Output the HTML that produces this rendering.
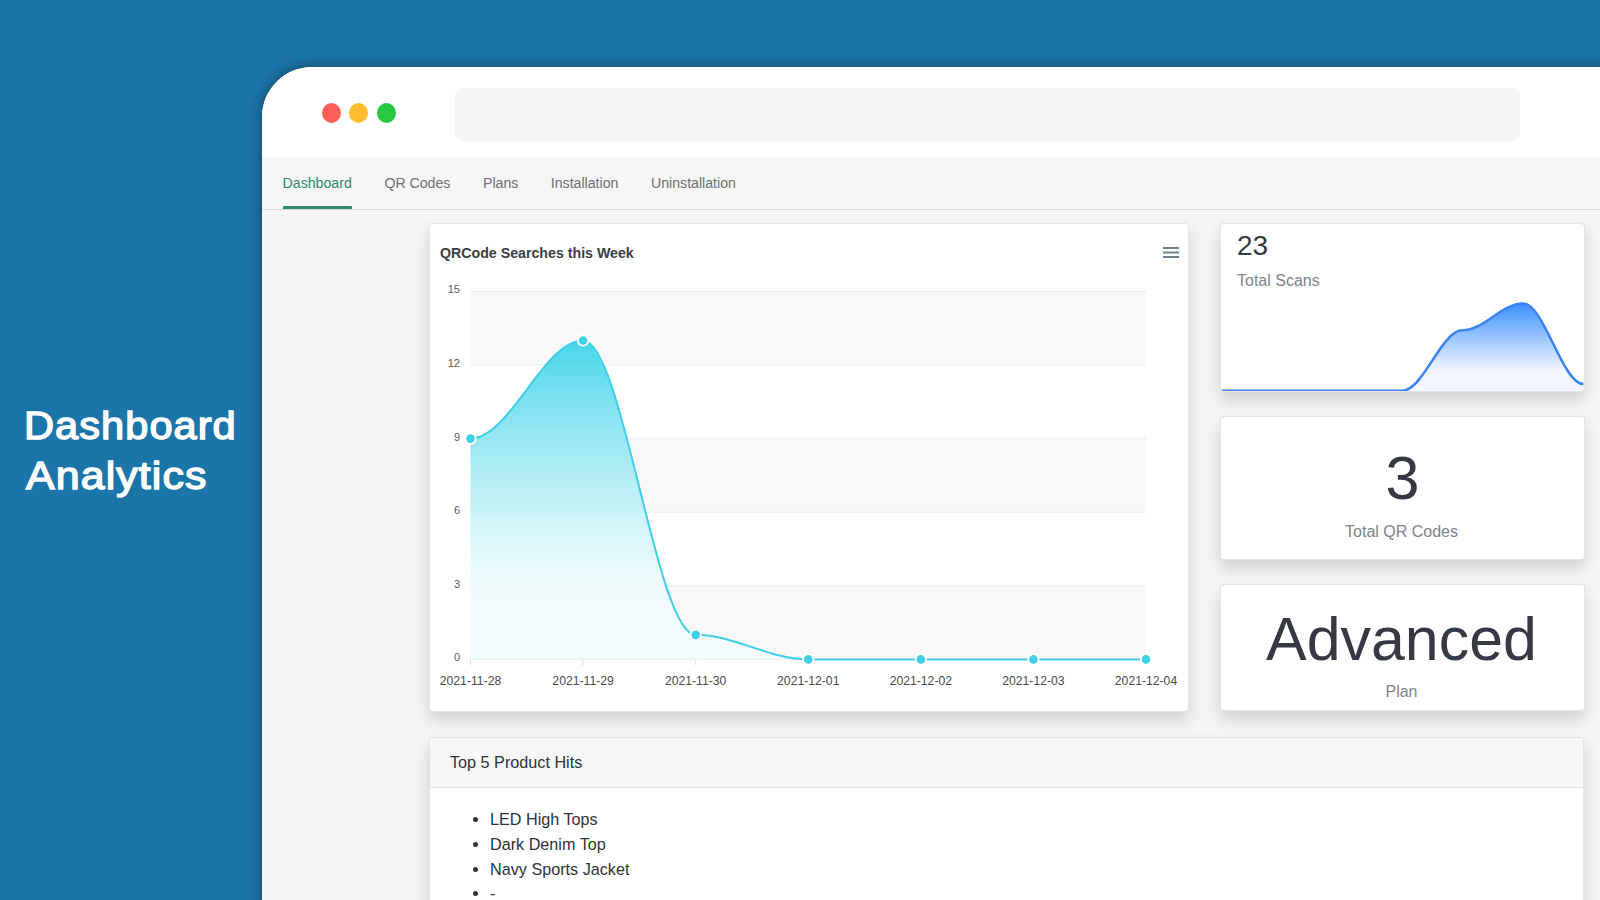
<!DOCTYPE html>
<html lang="en"><head><meta charset="utf-8"><title>Dashboard Analytics</title>
<style>
*{box-sizing:border-box}
html,body{margin:0;padding:0}
body{width:1600px;height:900px;overflow:hidden;background:#1c75a9;font-family:"Liberation Sans",Arial,sans-serif;position:relative;color:#212529}
.hero{margin:0;font-size:39px;line-height:50px;font-weight:normal;color:#fff}
.hero span{position:absolute;white-space:nowrap;transform-origin:0 0;letter-spacing:1px;-webkit-text-stroke:1.4px #fff}
.win{position:absolute;left:262px;top:67px;width:1400px;height:900px;background:#f5f5f5;border-top-left-radius:50px;box-shadow:0 0 13px 1px rgba(0,0,0,.4);overflow:hidden}
.bar{position:absolute;left:0;top:0;width:100%;height:90px;background:#fff}
.dot{position:absolute;top:36px;width:19px;height:20px;border-radius:50%}
.addr{position:absolute;left:193px;top:21px;width:1065px;height:53px;border-radius:8px;background:#f5f5f5}
.tabs{position:absolute;left:0;top:90px;width:100%;height:53px;border-bottom:1px solid #d6d8da;background:#f6f6f6;font-size:14.15px}
.tab{position:absolute;top:0;height:52px;line-height:53px;color:#6d7175;white-space:nowrap}
.tab.on{color:#2b8a6c}
.tab.on:after{content:"";position:absolute;left:0;right:0;bottom:0;height:3px;background:#2f8a6b;border-radius:1px 1px 0 0}
.card{position:absolute;background:#fff;border:1px solid rgba(0,0,0,.1);border-radius:4px;box-shadow:0 8px 16px rgba(0,0,0,.15)}
.muted{color:#7d848b}
.big{color:#343a40}
.hd{position:absolute;left:0;top:0;right:0;height:50px;background:#f7f7f7;border-bottom:1px solid #dfdfdf;border-radius:3px 3px 0 0;padding:11.5px 20px;font-size:16.2px;line-height:25px;color:#2e3338}
ul{position:absolute;left:20px;top:68.5px;margin:0;padding:0 0 0 40px;font-size:16.2px;line-height:25px;color:#2e3338}
</style></head><body>
<h1 class="hero"><span style="top:401px;left:23.6px;transform:scaleX(1.065)">Dashboard</span><span style="top:450.7px;left:25.7px;transform:scaleX(1.10)">Analytics</span></h1>
<div class="win">
  <div class="bar">
    <div class="dot" style="left:59.5px;background:#ff5f57"></div>
    <div class="dot" style="left:87px;background:#febc2e"></div>
    <div class="dot" style="left:114.5px;background:#28c840"></div>
    <div class="addr"></div>
  </div>
  <div class="tabs">
    <div class="tab on" style="left:20.6px">Dashboard</div>
    <div class="tab" style="left:122.4px">QR Codes</div>
    <div class="tab" style="left:221px">Plans</div>
    <div class="tab" style="left:288.8px">Installation</div>
    <div class="tab" style="left:389px">Uninstallation</div>
  </div>
  <div class="card" style="left:167px;top:156px;width:760px;height:489px"><svg width="758" height="487" viewBox="0 0 758 487" style="position:absolute;left:0;top:0;font-family:'Liberation Sans',sans-serif">
<defs><linearGradient id="g1" x1="0" y1="0" x2="0" y2="1"><stop offset="0" stop-color="#42d4ea" stop-opacity="0.97"/><stop offset="0.8" stop-color="#eefbfd" stop-opacity="0.6"/><stop offset="1" stop-color="#eefbfd" stop-opacity="0.6"/></linearGradient></defs>
<rect x="40.50" y="67.40" width="675.50" height="73.60" fill="#f8f8f8"/><rect x="40.50" y="214.60" width="675.50" height="73.60" fill="#f8f8f8"/><rect x="40.50" y="361.80" width="675.50" height="73.60" fill="#f8f8f8"/><line x1="40.50" y1="67.40" x2="716.00" y2="67.40" stroke="#ececec" stroke-width="1"/><line x1="40.50" y1="141.00" x2="716.00" y2="141.00" stroke="#ececec" stroke-width="1"/><line x1="40.50" y1="214.60" x2="716.00" y2="214.60" stroke="#ececec" stroke-width="1"/><line x1="40.50" y1="288.20" x2="716.00" y2="288.20" stroke="#ececec" stroke-width="1"/><line x1="40.50" y1="361.80" x2="716.00" y2="361.80" stroke="#ececec" stroke-width="1"/><line x1="40.50" y1="435.40" x2="716.00" y2="435.40" stroke="#ececec" stroke-width="1"/>
<line x1="40.50" y1="435.40" x2="40.50" y2="441.40" stroke="#e0e0e0" stroke-width="1"/><line x1="153.08" y1="435.40" x2="153.08" y2="441.40" stroke="#e0e0e0" stroke-width="1"/><line x1="265.67" y1="435.40" x2="265.67" y2="441.40" stroke="#e0e0e0" stroke-width="1"/><line x1="378.25" y1="435.40" x2="378.25" y2="441.40" stroke="#e0e0e0" stroke-width="1"/><line x1="490.83" y1="435.40" x2="490.83" y2="441.40" stroke="#e0e0e0" stroke-width="1"/><line x1="603.42" y1="435.40" x2="603.42" y2="441.40" stroke="#e0e0e0" stroke-width="1"/><line x1="716.00" y1="435.40" x2="716.00" y2="441.40" stroke="#e0e0e0" stroke-width="1"/>
<path d="M40.50 214.60 C79.90 214.60 113.68 116.47 153.08 116.47 C192.49 116.47 226.26 410.87 265.67 410.87 C305.07 410.87 338.85 435.40 378.25 435.40 C417.65 435.40 451.43 435.40 490.83 435.40 C530.24 435.40 564.01 435.40 603.42 435.40 C642.82 435.40 676.60 435.40 716.00 435.40 L716.00 435.40 L40.50 435.40 Z" fill="url(#g1)" id="mainarea"/>
<path d="M40.50 214.60 C79.90 214.60 113.68 116.47 153.08 116.47 C192.49 116.47 226.26 410.87 265.67 410.87 C305.07 410.87 338.85 435.40 378.25 435.40 C417.65 435.40 451.43 435.40 490.83 435.40 C530.24 435.40 564.01 435.40 603.42 435.40 C642.82 435.40 676.60 435.40 716.00 435.40" fill="none" stroke="#3fcfe6" stroke-width="2"/>
<circle cx="40.50" cy="214.60" r="5.2" fill="#3fd0e6" stroke="#fff" stroke-width="1.8"/><circle cx="153.08" cy="116.47" r="5.2" fill="#3fd0e6" stroke="#fff" stroke-width="1.8"/><circle cx="265.67" cy="410.87" r="5.2" fill="#3fd0e6" stroke="#fff" stroke-width="1.8"/><circle cx="378.25" cy="435.40" r="5.2" fill="#3fd0e6" stroke="#fff" stroke-width="1.8"/><circle cx="490.83" cy="435.40" r="5.2" fill="#3fd0e6" stroke="#fff" stroke-width="1.8"/><circle cx="603.42" cy="435.40" r="5.2" fill="#3fd0e6" stroke="#fff" stroke-width="1.8"/><circle cx="716.00" cy="435.40" r="5.2" fill="#3fd0e6" stroke="#fff" stroke-width="1.8"/>
<text x="30.00" y="69.40" text-anchor="end" font-size="11" fill="#5a5a5a">15</text><text x="30.00" y="143.00" text-anchor="end" font-size="11" fill="#5a5a5a">12</text><text x="30.00" y="216.60" text-anchor="end" font-size="11" fill="#5a5a5a">9</text><text x="30.00" y="290.20" text-anchor="end" font-size="11" fill="#5a5a5a">6</text><text x="30.00" y="363.80" text-anchor="end" font-size="11" fill="#5a5a5a">3</text><text x="30.00" y="437.40" text-anchor="end" font-size="11" fill="#5a5a5a">0</text>
<text x="40.50" y="461.00" text-anchor="middle" font-size="12.2" fill="#4a4a4a">2021-11-28</text><text x="153.08" y="461.00" text-anchor="middle" font-size="12.2" fill="#4a4a4a">2021-11-29</text><text x="265.67" y="461.00" text-anchor="middle" font-size="12.2" fill="#4a4a4a">2021-11-30</text><text x="378.25" y="461.00" text-anchor="middle" font-size="12.2" fill="#4a4a4a">2021-12-01</text><text x="490.83" y="461.00" text-anchor="middle" font-size="12.2" fill="#4a4a4a">2021-12-02</text><text x="603.42" y="461.00" text-anchor="middle" font-size="12.2" fill="#4a4a4a">2021-12-03</text><text x="716.00" y="461.00" text-anchor="middle" font-size="12.2" fill="#4a4a4a">2021-12-04</text>
<text x="10" y="33.5" font-size="14.2" font-weight="bold" fill="#3a4043">QRCode Searches this Week</text>
<g fill="#6e8192"><rect x="733" y="23" width="16" height="2"/><rect x="733" y="27.5" width="16" height="2"/><rect x="733" y="32" width="16" height="2"/></g>
</svg></div>
  <div class="card" style="left:958px;top:156px;width:365px;height:169px;overflow:hidden">
    <div class="big" style="position:absolute;left:16px;top:4.6px;font-size:28px;line-height:34px">23</div>
    <div class="muted" style="position:absolute;left:16px;top:44.5px;font-size:16px;line-height:24px">Total Scans</div>
    <svg width="364" height="168" viewBox="0 0 364 168" style="position:absolute;left:-1px;top:0.8px">
<defs><linearGradient id="g2" x1="0" y1="0" x2="0" y2="1"><stop offset="0" stop-color="#3d92fd" stop-opacity="1"/><stop offset="0.75" stop-color="#f1f6ff" stop-opacity="1"/><stop offset="1" stop-color="#f3f7ff" stop-opacity="1"/></linearGradient>
<clipPath id="c2"><rect x="0" y="0" width="364" height="168" rx="3"/></clipPath></defs>
<g clip-path="url(#c2)">
<path d="M0.50 165.80 C21.67 165.80 39.83 165.80 61.00 165.80 C82.17 165.80 100.33 165.80 121.50 165.80 C142.68 165.80 160.82 165.80 182.00 165.80 C203.18 165.80 221.32 105.36 242.50 105.36 C263.68 105.36 281.82 78.50 303.00 78.50 C324.18 78.50 342.32 159.08 363.50 159.08 L363.50 167.80 L0.50 167.80 Z" fill="url(#g2)"/>
<path d="M0.50 165.80 C21.67 165.80 39.83 165.80 61.00 165.80 C82.17 165.80 100.33 165.80 121.50 165.80 C142.68 165.80 160.82 165.80 182.00 165.80 C203.18 165.80 221.32 105.36 242.50 105.36 C263.68 105.36 281.82 78.50 303.00 78.50 C324.18 78.50 342.32 159.08 363.50 159.08" fill="none" stroke="#3b82f6" stroke-width="2.5"/>
</g>
</svg>
  </div>
  <div class="card" style="left:958px;top:348.5px;width:365px;height:144px;text-align:center">
    <div class="big" style="position:absolute;left:0;right:0;top:25.5px;font-size:61px;line-height:72px">3</div>
    <div class="muted" style="position:absolute;left:-1px;right:1px;top:103.5px;font-size:16px;line-height:24px">Total QR Codes</div>
  </div>
  <div class="card" style="left:958px;top:516.5px;width:365px;height:127px;text-align:center">
    <div class="big" style="position:absolute;left:-1px;right:1px;top:18px;font-size:60.9px;line-height:72px">Advanced</div>
    <div class="muted" style="position:absolute;left:-1px;right:1px;top:95.5px;font-size:16px;line-height:24px">Plan</div>
  </div>
  <div class="card" style="left:167px;top:670px;width:1155px;height:300px">
    <div class="hd">Top 5 Product Hits</div>
    <ul><li>LED High Tops</li><li>Dark Denim Top</li><li>Navy Sports Jacket</li><li style="margin-top:-1px">-</li><li>-</li></ul>
  </div>
</div>
</body></html>
